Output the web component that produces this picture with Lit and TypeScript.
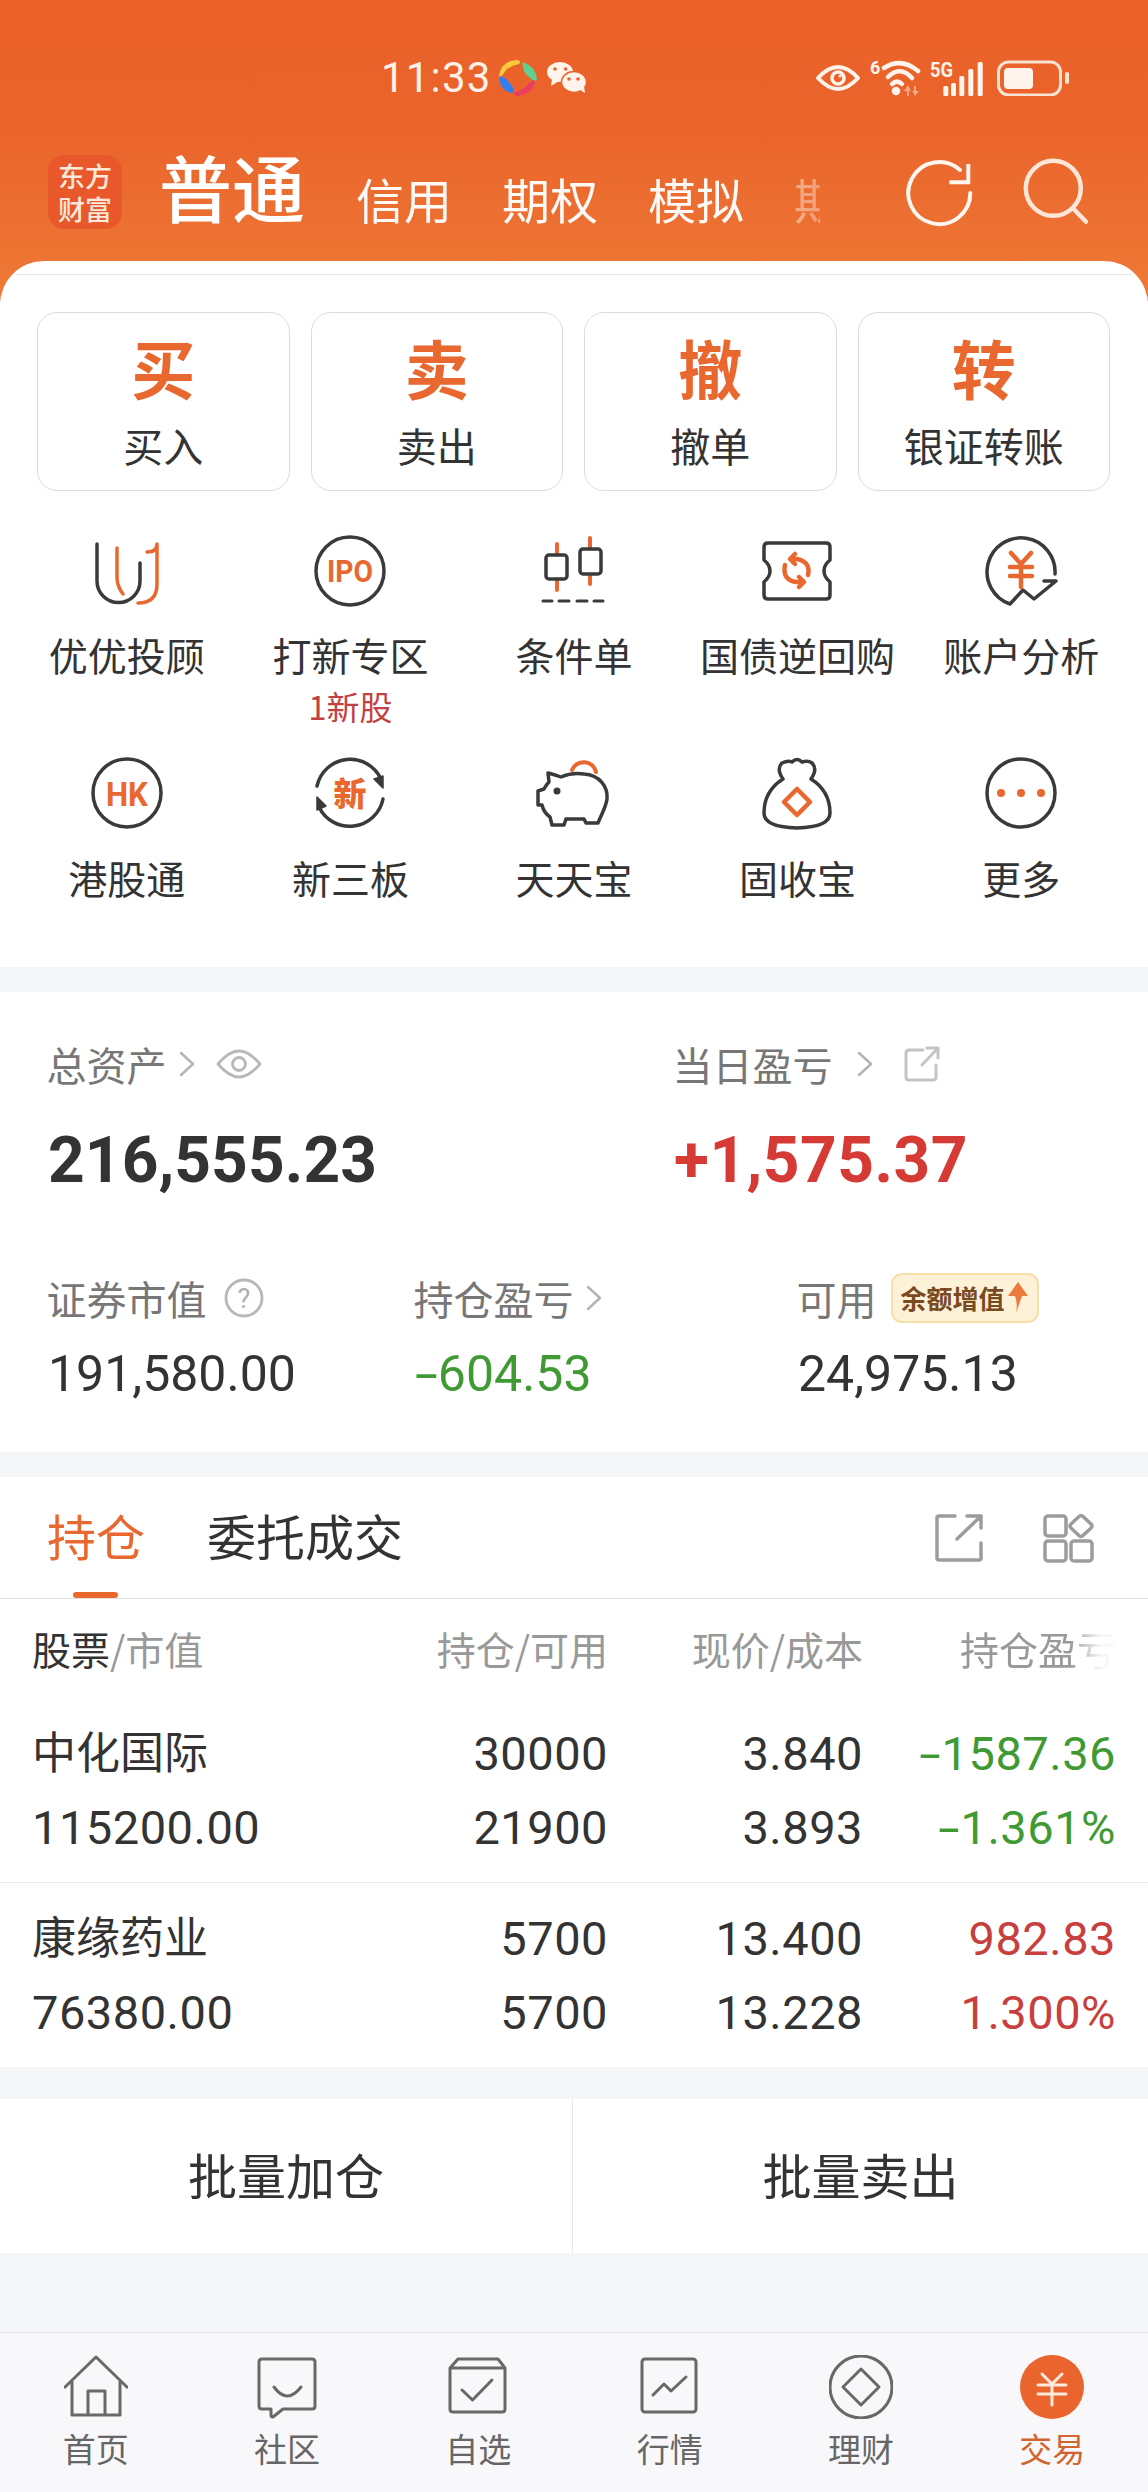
import { LitElement, html, css, svg } from "lit";
import { customElement } from "lit/decorators.js";

const D = "#3a3a3a";
const O = "#e9682f";
const ic = (w: number, h: number, body: unknown, cls = "") =>
  html`<svg class=${cls} width=${w} height=${h} viewBox="0 0 ${w} ${h}" fill="none" stroke-linecap="round" stroke-linejoin="round">${body}</svg>`;

const menuIcons: Record<string, unknown> = {
  u: svg`<g stroke-width="3.5"><path stroke=${D} d="M10 12V49A21.5 21.5 0 0 0 53 49V31"/><path stroke=${O} d="M30 16V46Q30 54 36 62"/><path stroke=${O} d="M60 20Q70 20 70 12V52Q70 71 51 71"/></g>`,
  ipo: svg`<circle cx="40" cy="39" r="34" stroke=${D} stroke-width="3.5"/><text x="40" y="50" text-anchor="middle" class="ict" font-size="31" textLength="46" lengthAdjust="spacingAndGlyphs" fill=${O}>IPO</text>`,
  candle: svg`<g stroke-width="4"><path stroke=${O} d="M23 12V58M56 6V52"/><rect x="12" y="23" width="21" height="24" rx="3" fill="#fff" stroke=${D} stroke-width="3.5"/><rect x="46" y="17" width="21" height="25" rx="3" fill="#fff" stroke=${D} stroke-width="3.5"/><path stroke=${D} stroke-width="3" d="M9 69H18M25 69H35M43 69H53M60 69H69"/></g>`,
  ticket: svg`<path stroke=${D} stroke-width="3.5" d="M10 11H68Q72 11 72 15V28Q66 33 66 39Q66 45 72 50V63Q72 67 68 67H10Q6 67 6 63V50Q12 45 12 39Q12 33 6 28V15Q6 11 10 11Z"/><g stroke=${O} stroke-width="4.5"><path d="M50 43Q53 30 39 27H33M37 22L32 27L37 32"/><path d="M27 33Q24 48 38 50H45M41 45L46 50L41 55"/></g>`,
  yen: svg`<path stroke=${D} stroke-width="3.5" d="M74 42A34 34 0 1 0 29 72L42 58L53 67L75 49H63"/><g stroke=${O} stroke-width="4.5"><path d="M30 21L40 32L50 21M29 35H51M29 44H51M40 32V55"/></g>`,
  hk: svg`<circle cx="40" cy="38" r="34" stroke=${D} stroke-width="3.5"/><text x="40" y="51" text-anchor="middle" class="ict" font-size="34" textLength="42" lengthAdjust="spacingAndGlyphs" fill=${O}>HK</text>`,
  xin: svg`<g stroke=${D} stroke-width="3.5"><path d="M7 31A34 34 0 0 1 71 24"/><path d="M73 44A34 34 0 0 1 9 52"/></g><path fill=${D} stroke=${D} d="M73 33L64 24L73 21ZM7 42L16 51L7 55Z" stroke-width="1.5"/><text x="40" y="51" text-anchor="middle" class="icc" font-size="33" fill=${O}>新</text>`,
  pig: svg`<path stroke=${D} stroke-width="3.5" d="M14 18Q22 20 27 22Q38 17 50 19C66 20 74 32 73 44C72 52 68 58 64 68H52L50 64H32L30 70H18L16 62Q10 58 8 50H4V36L10 34Q12 30 15 27Z"/><circle cx="23" cy="36" r="3.5" fill=${D}/><path stroke=${O} stroke-width="4" d="M38 15A12.5 12 0 0 1 62 17"/>`,
  bag: svg`<path stroke=${D} stroke-width="3.5" d="M25 24Q18 14 24 8Q30 5 34 7Q39 2 44 7Q50 5 54 8Q60 14 53 24Q72 36 72 58Q72 72 39 73Q6 72 6 58Q6 36 25 24Z"/><path stroke=${O} stroke-width="4.5" d="M39 34L52 47L39 60L26 47Z"/>`,
  more: svg`<circle cx="40" cy="38" r="34" stroke=${D} stroke-width="3.5"/><g fill=${O}><circle cx="20" cy="38" r="4"/><circle cx="40" cy="38" r="4"/><circle cx="60" cy="38" r="4"/></g>`,
};

const N = "#686868";
const tabIcons: Record<string, unknown> = {
  home: svg`<g stroke=${N} stroke-width="3"><path stroke-linecap="butt" d="M0 33L32 2L64 33"/><path d="M8 27V60H56V27M24 60V36H41V60"/></g>`,
  chat: svg`<g stroke=${N} stroke-width="3"><path d="M7 4H57Q60 4 60 7V51Q60 54 57 54H28L18 62Q16 62 16 60V54H7Q4 54 4 51V7Q4 4 7 4Z"/><path d="M19 32Q32 50 46 32"/></g>`,
  box: svg`<g stroke=${N} stroke-width="3"><path d="M12 4H52L59 13V54Q59 57 56 57H7Q4 57 4 54V13ZM4 13H59"/><path d="M16 35L26.5 45L46 25"/></g>`,
  line: svg`<g stroke=${N} stroke-width="3"><rect x="4" y="4" width="54" height="53" rx="3"/><path d="M15 40L26 29L33 36L48 22"/></g>`,
  coin: svg`<circle cx="32" cy="32" r="31" stroke=${N} stroke-width="3"/><path stroke=${N} stroke-width="3" d="M32 14L50 32L32 50L14 32Z"/>`,
  trade: svg`<circle cx="32" cy="32" r="32" fill="#ea642d"/><g stroke="#fde9dd" stroke-width="3"><path d="M22 19L32 29L42 19M18 30H46M18 39H46M32 29V50"/></g>`,
};

const buttons = [["买", "买入"], ["卖", "卖出"], ["撤", "撤单"], ["转", "银证转账"]];
const menu = [
  ["u", "优优投顾"], ["ipo", "打新专区", "1新股"], ["candle", "条件单"], ["ticket", "国债逆回购"], ["yen", "账户分析"],
  ["hk", "港股通"], ["xin", "新三板"], ["pig", "天天宝"], ["bag", "固收宝"], ["more", "更多"],
];
const tabs = [["home", "首页"], ["chat", "社区"], ["box", "自选"], ["line", "行情"], ["coin", "理财"], ["trade", "交易"]];
const rows = [
  { name: "中化国际", val: "115200.00", c: ["30000", "21900"], p: ["3.840", "3.893"], g: ["-1587.36", "-1.361%"], cls: "down" },
  { name: "康缘药业", val: "76380.00", c: ["5700", "5700"], p: ["13.400", "13.228"], g: ["982.83", "1.300%"], cls: "up" },
];

const signed = (v: string) =>
  v.startsWith("-") ? html`<span class="minus">-</span>${v.slice(1)}` : v;
const chev = (cls: string) => ic(18, 26, svg`<path stroke="#b4b4b4" stroke-width="2.5" d="M3 2L15 13L3 24"/>`, cls);
const W = "#fff4ec";

@customElement("app-root")
export class AppRoot extends LitElement {
  static styles = css`
    :host { display: block; width: 1148px; height: 2492px; position: relative; overflow: hidden; background: #f5f6f8;
      font-family: "Noto Sans CJK SC", sans-serif; color: #333; }
    svg { display: block; flex: none; }
    .num { font-family: Roboto, "Noto Sans CJK SC", sans-serif; }
    .ict { font-family: Roboto, sans-serif; font-weight: 700; }
    .icc { font-family: "Noto Sans CJK SC", sans-serif; font-weight: 900; }
    .minus { display: inline-block; transform: scaleX(1.65); transform-origin: right center; margin-left: .18em; }

    .top { height: 301px; background: linear-gradient(180deg, #ea622a 0%, #ea632b 40%, #ee7a36 100%); box-sizing: border-box; padding-top: 58px; }
    .status { display: flex; align-items: center; height: 40px; padding: 0 79px 0 381px; color: #fdf1e8; }
    .time { font-size: 42px; line-height: 40px; width: 117px; letter-spacing: 1.2px; }
    .wx { margin-left: 10px; }
    .s-right { margin-left: auto; display: flex; align-items: center; }
    .wifi { margin-left: 10px; }
    .sig { margin-left: 9px; }
    .bat { margin-left: 13px; }
    .nav { display: flex; align-items: flex-start; height: 74px; margin-top: 57px; padding-left: 48px; color: #fff; }
    .logo { width: 74px; height: 74px; border-radius: 16px; background: #e8582a; font-size: 27px; line-height: 33px; font-weight: 500; text-align: center; display: flex; flex-direction: column; align-items: center; justify-content: center; color: #fde8dc; }
    .strip { display: flex; align-items: flex-end; margin-left: 37px; width: 661px; height: 74px; white-space: nowrap;
      -webkit-mask-image: linear-gradient(90deg, #000 90%, rgba(0,0,0,0.45) 96%, rgba(0,0,0,0.35) 100%); mask-image: linear-gradient(90deg, #000 90%, rgba(0,0,0,0.45) 96%, rgba(0,0,0,0.35) 100%); }
    .strip .big { font-size: 73px; line-height: 73px; font-weight: 500; margin-bottom: 7px; margin-right: 51px; flex: none; }
    .strip span { font-size: 48px; line-height: 54px; margin-right: 50px; margin-bottom: 4px; flex: none; opacity: .96; }
    .refresh { margin: 3px 0 0 85px; }
    .search { margin: 3px 0 0 45px; }

    .sheet { position: relative; margin-top: -40px; background: #fff; border-radius: 44px 44px 0 0; padding-top: 13px; height: 706px; box-sizing: border-box; }
    .rule { height: 1px; background: #e6e6e6; margin: 0 16px; }
    .btns { display: grid; grid-template-columns: repeat(4, 252.5px); gap: 21px; padding: 37px 37px 0; }
    .btn { height: 179px; box-sizing: border-box; border: 1.5px solid #dcdcdc; border-radius: 20px; display: flex; flex-direction: column; align-items: center; }
    .btn b { font-size: 64px; line-height: 72px; margin-top: 17px; color: #e9682f; font-weight: 700; }
    .btn i { font-style: normal; font-size: 40px; line-height: 50px; margin-top: 18px; color: #333; }
    .menu { display: grid; grid-template-columns: repeat(5, 223.6px); grid-template-rows: 223px auto; padding: 41px 15px 0; }
    .item { display: flex; flex-direction: column; align-items: center; }
    .item .lb { font-size: 39px; line-height: 50px; margin-top: 17px; color: #333; white-space: nowrap; }
    .item .sub { font-size: 33px; line-height: 42px; color: #c24141; margin-top: 6px; }

    .assets { background: #fff; margin-top: 25px; height: 460px; box-sizing: border-box; padding: 50px 48px 0; }
    .a-top { display: grid; grid-template-columns: 626px 1fr; }
    .a-bot { display: grid; grid-template-columns: 367px 383px 1fr; margin-top: 79px; }
    .a-head { display: flex; align-items: center; color: #777; font-size: 40px; line-height: 50px; white-space: nowrap; margin: -3px 0 0 -1.5px; }
    .chev1 { margin-left: 11px; }
    .eye { margin-left: 20px; }
    .chev2 { margin-left: 23px; }
    .share { margin-left: 29px; }
    .qm { margin-left: 17px; }
    .val-b { font-size: 64px; line-height: 72px; font-weight: 700; margin-top: 36px; letter-spacing: .1px; }
    .val-b.red { letter-spacing: .5px; }
    .val { font-size: 50px; line-height: 64px; margin-top: 19px; }
    .red { color: #d63a35; }
    .green { color: #3f9a33; }
    .badge { display: flex; align-items: center; justify-content: center; width: 148px; height: 50px; margin-left: 14px; box-sizing: border-box; background: #fdf1d8; border: 2px solid #f6dfa8; border-radius: 11px; color: #7a4a1f; font-size: 26px; font-weight: 700; line-height: 30px; }

    .hold { background: #fff; margin-top: 25px; height: 590px; }
    .h-tabs { display: flex; align-items: center; height: 122px; box-sizing: border-box; border-bottom: 1.5px solid #e2e2e2; padding: 0 53px 0 47px; position: relative; }
    .h-tabs span { font-size: 49px; line-height: 60px; margin-bottom: 6px; }
    .h-tabs .on { color: #e9682f; margin-right: 62px; }
    .h-tabs .on::after { content: ""; position: absolute; left: 73px; bottom: 0; width: 45px; height: 6px; background: #e9682f; border-radius: 3px; }
    .h-ic { margin-left: auto; display: flex; align-items: center; gap: 60px; }
    .grid { display: grid; grid-template-columns: 352px 224px 255px 253px; padding: 0 32px; align-items: center; }
    .thead { height: 104px; box-sizing: border-box; padding-bottom: 6px; color: #999; font-size: 39px; }
    .thead > * { text-align: right; }
    .thead > :first-child { text-align: left; }
    .thead em { font-style: normal; color: #333; }
    .fade { -webkit-mask-image: linear-gradient(90deg, #000 70%, rgba(0,0,0,0.08) 90%); mask-image: linear-gradient(90deg, #000 70%, rgba(0,0,0,0.08) 90%); justify-self: end; }
    .tr + .tr { border-top: 1.5px solid #ececec; }
    .row { grid-template-rows: 74px 74px; padding-top: 14px; padding-bottom: 17px; line-height: 74px; font-size: 47px; color: #333; letter-spacing: .5px; }
    .tr + .tr .row { padding-top: 19px; padding-bottom: 15px; }
    .row div { text-align: right; white-space: nowrap; }
    .row .nm { text-align: left; font-size: 44px; letter-spacing: 0; }
    .row .nv { text-align: left; }
    .row .down { color: #3f9a33; }
    .row .up { color: #c8403e; }

    .batch { display: grid; grid-template-columns: 573px 1fr; background: #fff; margin-top: 32px; height: 154px; font-size: 49px; }
    .batch div { display: flex; align-items: center; justify-content: center; box-sizing: border-box; padding-bottom: 6px; }
    .batch div:first-child { border-right: 1.5px solid #e8e8e8; }

    .bar { position: absolute; left: 0; right: 0; bottom: 0; height: 160px; box-sizing: border-box; background: #f8f8fb; border-top: 1.5px solid #e3e3e6; display: grid; grid-template-columns: repeat(6, 191.33px); padding-top: 22px; }
    .tab { display: flex; flex-direction: column; align-items: center; color: #666; font-size: 33px; line-height: 44px; }
    .tab span { margin-top: 7px; }
    .tab.act { color: #d2652f; }
  `;

  render() {
    return html`
      <div class="top">
        <div class="status">
          <div class="time num">11:33</div>
          ${ic(39, 38, svg`<path fill="#f6c83a" d="M1 17Q3 2 18 1Q24 1 21 5Q10 7 6 14Q2 20 1 17Z"/><path fill="#5fd08f" d="M25 3Q38 8 39 20Q39 23 35 21Q26 16 25 8Q24 3 25 3Z"/><path fill="#ea3f5c" d="M37 22Q36 34 20 37Q14 37 17 33Q26 31 31 24Q35 20 37 22Z"/><path fill="#2f7ff0" d="M2 17Q8 18 14 27Q18 33 14 34Q3 32 1 20Z"/>`)}
          ${ic(40, 34, svg`<ellipse cx="13" cy="11" rx="13" ry="10" fill=${W}/><path d="M5 18L4 25L12 20Z" fill=${W}/><ellipse cx="27" cy="21" rx="12.5" ry="10.5" fill=${W} stroke="#ea632b" stroke-width="1.5"/><path d="M33 29L38 32L37 25Z" fill=${W}/><g fill="#ea632b"><circle cx="8" cy="8" r="1.8"/><circle cx="18.7" cy="8" r="1.8"/><circle cx="22" cy="18" r="1.8"/><circle cx="31" cy="18" r="1.8"/></g>`, "wx")}
          <div class="s-right">
            ${ic(44, 28, svg`<path stroke=${W} stroke-width="4" d="M2 14Q12 3 22 3Q32 3 42 14Q32 25 22 25Q12 25 2 14Z"/><circle cx="22" cy="14" r="6" stroke=${W} stroke-width="3.5"/><circle cx="24" cy="12" r="1.5" fill=${W}/>`)}
            ${ic(51, 44, svg`<g transform="translate(0 3)"><g stroke=${W} stroke-width="4.5"><path d="M14 9Q31 -2 48 12"/><path d="M18 18Q30 6 42 19"/><path d="M22 25Q27 20 32 25"/></g><circle cx="26" cy="32" r="4.3" fill=${W}/><text x="0" y="15" font-size="18" fill=${W} class="ict">6</text><path fill="#f7a986" d="M38 26L34 32H37V37H39V32H41ZM44 27V32H42L45 37L49 32H46V27Z"/></g>`, "wifi")}
            ${ic(54, 43, svg`<g transform="translate(0 3)"><text x="0" y="17" font-size="20" fill=${W} textLength="23" lengthAdjust="spacingAndGlyphs" class="ict">5G</text><g fill=${W}><rect x="13.3" y="26" width="5" height="10" rx="1.5"/><rect x="21" y="23" width="5" height="13" rx="1.5"/><rect x="29.3" y="16" width="5" height="20" rx="1.5"/><rect x="38.3" y="9" width="5" height="27" rx="1.5"/><rect x="47.7" y="2" width="5" height="34" rx="1.5"/></g></g>`, "sig")}
            ${ic(72, 36, svg`<rect x="1.5" y="2" width="62" height="33" rx="10" stroke="#fbe3d4" stroke-width="3"/><rect x="7" y="8" width="29" height="21" rx="4" fill=${W}/><rect x="68" y="12" width="4" height="12" rx="2" fill="#fbe3d4"/>`, "bat")}
          </div>
        </div>
        <div class="nav">
          <div class="logo"><div>东方</div><div>财富</div></div>
          <div class="strip">
            <div class="big">普通</div>
            <span>信用</span><span>期权</span><span>模拟</span><span>期货</span>
          </div>
          ${ic(70, 70, svg`<g stroke="#fff6ef" stroke-width="4"><path d="M65.3 35A31 31 0 1 1 55 12"/><path stroke-linecap="butt" stroke-linejoin="miter" d="M63.3 6V24.3H44.3"/></g>`, "refresh")}
          ${ic(70, 70, svg`<circle cx="33.3" cy="30.3" r="27.5" stroke="#fde6d8" stroke-width="4.5"/><path stroke="#fde6d8" stroke-width="4.5" d="M52.7 50L66 63.7"/>`, "search")}
        </div>
      </div>

      <div class="sheet">
        <div class="rule"></div>
        <div class="btns">
          ${buttons.map(([g, l]) => html`<div class="btn"><b>${g}</b><i>${l}</i></div>`)}
        </div>
        <div class="menu">
          ${menu.map(([k, l, s]) => html`<div class="item">
            ${ic(80, 80, menuIcons[k])}
            <div class="lb">${l}</div>
            ${s ? html`<div class="sub">${s}</div>` : ""}
          </div>`)}
        </div>
      </div>

      <div class="assets">
        <div class="a-top">
          <div>
            <div class="a-head">总资产${chev("chev1")}${ic(46, 30, svg`<path stroke="#b8b8b8" stroke-width="2.8" d="M2 15Q13 2 23 2Q33 2 44 15Q33 28 23 28Q13 28 2 15Z"/><circle cx="23" cy="15" r="6.5" stroke="#b8b8b8" stroke-width="2.8"/>`, "eye")}</div>
            <div class="val-b num">216,555.23</div>
          </div>
          <div>
            <div class="a-head">当日盈亏${chev("chev2")}${ic(38, 38, svg`<path stroke="#c4c4c4" stroke-width="3" d="M20 5H6Q3 5 3 8V32Q3 35 6 35H30Q33 35 33 32V20M19 20L35 3M24 3H35V13"/>`, "share")}</div>
            <div class="val-b num red">+1,575.37</div>
          </div>
        </div>
        <div class="a-bot">
          <div>
            <div class="a-head">证券市值${ic(40, 40, svg`<circle cx="20" cy="20" r="18" stroke="#b8b8b8" stroke-width="2.8"/><text x="20" y="30" text-anchor="middle" font-size="27" fill="#b0b0b0" font-family="Roboto">?</text>`, "qm")}</div>
            <div class="val num">191,580.00</div>
          </div>
          <div>
            <div class="a-head">持仓盈亏${chev("chev1")}</div>
            <div class="val num green">${signed("-604.53")}</div>
          </div>
          <div>
            <div class="a-head">可用<div class="badge"><span>余额增值</span>${ic(24, 34, svg`<path fill="#ec7a3a" d="M13 1L23 15H17L11 32Q13 22 10 15H3Z"/>`)}</div></div>
            <div class="val num">24,975.13</div>
          </div>
        </div>
      </div>

      <div class="hold">
        <div class="h-tabs">
          <span class="on">持仓</span><span>委托成交</span>
          <div class="h-ic">
            ${ic(48, 48, svg`<path stroke="#9c9c9c" stroke-width="3.5" d="M20 2H4Q2 2 2 4V44Q2 46 4 46H44Q46 46 46 44V29M22 25L46 2M32 2H46V14"/>`)}
            ${ic(52, 50, svg`<g stroke="#9c9c9c" stroke-width="3.5"><rect x="2" y="3" width="21" height="20" rx="3"/><rect x="2" y="28" width="21" height="20" rx="3"/><rect x="28" y="28" width="21" height="20" rx="3"/><path d="M36 3.5Q38 1.5 40 3.5L48 11Q50 13 48 15L40 22.5Q38 24.5 36 22.5L28 15Q26 13 28 11Z"/></g>`)}
          </div>
        </div>
        <div class="grid thead">
          <div><em>股票</em>/市值</div><div>持仓/可用</div><div>现价/成本</div><div class="fade">持仓盈亏</div>
        </div>
        ${rows.map((r) => html`<div class="tr"><div class="grid row num">
          <div class="nm">${r.name}</div><div>${r.c[0]}</div><div>${r.p[0]}</div><div class=${r.cls}>${signed(r.g[0])}</div>
          <div class="nv">${r.val}</div><div>${r.c[1]}</div><div>${r.p[1]}</div><div class=${r.cls}>${signed(r.g[1])}</div>
        </div></div>`)}
      </div>

      <div class="batch"><div>批量加仓</div><div>批量卖出</div></div>

      <div class="bar">
        ${tabs.map(([k, l], i) => html`<div class="tab ${i === 5 ? "act" : ""}">${ic(64, 64, tabIcons[k])}<span>${l}</span></div>`)}
      </div>
    `;
  }
}
